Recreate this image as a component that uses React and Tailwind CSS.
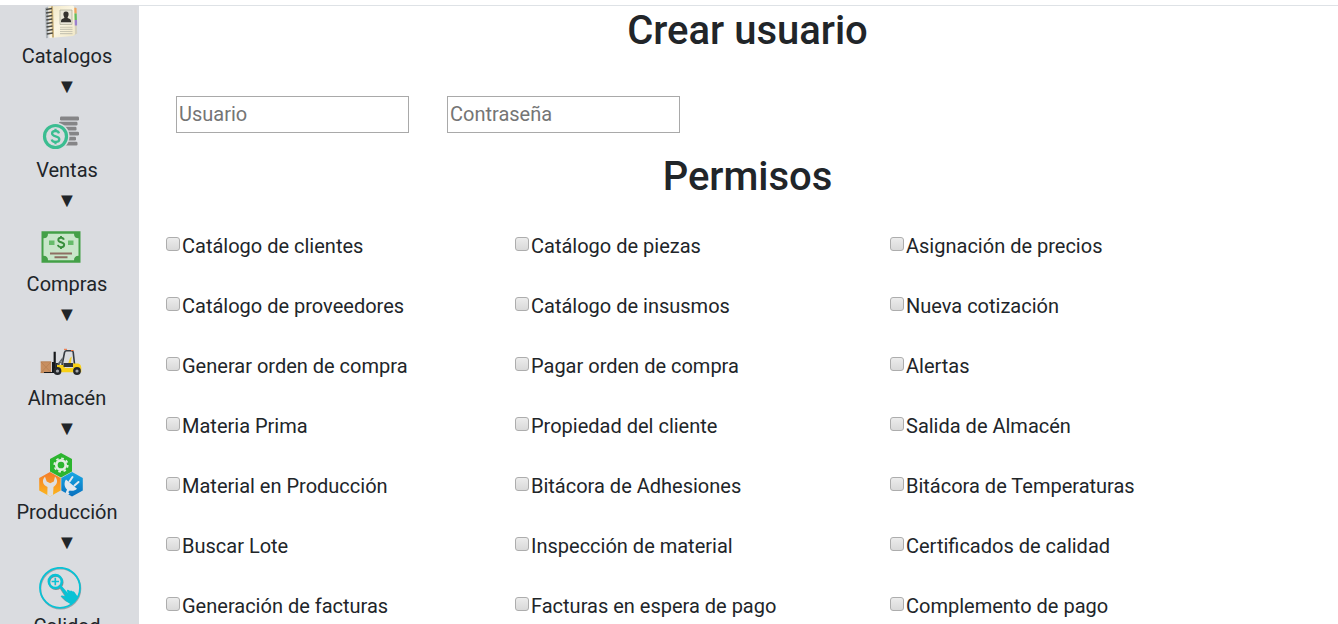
import React from "react";

function CatalogIcon() {
  return (
    <svg viewBox="0 0 44 44" className="size-11" aria-hidden="true">
      <defs>
        <linearGradient id="cover" x1="0" x2="1" y2="1">
          <stop offset="0" stopColor="#f1e6c2" />
          <stop offset="0.5" stopColor="#fbf6e4" />
          <stop offset="1" stopColor="#efe6c4" />
        </linearGradient>
      </defs>
      <path d="M6 11l3-1.500v31.500l-2 .3z" fill="#aeb4b9" />
      <path d="M34 10h3l1.200 26.500-3.700 2z" fill="#d3cfbd" />
      <path d="M35 11h2.500l.2 5.500H35z" fill="#f0a45c" />
      <path d="M35 16.500h2.700l.2 6.500H35z" fill="#64bd5b" />
      <path d="M35 23h3l.1 5.500H35z" fill="#9b80cf" />
      <path d="M9.500 9.500L33.500 8.500q1.700 0 1.700 2L36 37q0 1.600-2 1.900L10.500 41z" fill="url(#cover)" />
      <path d="M12 9.300h2l1 31.300h-2z" fill="#c6ae78" />
      <path d="M7 12.500l6-1M7 16l6-1M7.300 19.500l6-1M7.300 23l6-1M7.500 26.500l6-1M7.500 30l6-1M7.800 33.500l6-1M7.800 37l6-1" stroke="#4b4a44" strokeWidth="1.600" />
      <path d="M21 13h12v14.500H21z" fill="#e9e6d8" stroke="#aaa995" strokeWidth=".7" />
      <path d="M27 14.500c2.200 0 3 1.600 2.500 3.700-.3 1.300-.9 1.800-.9 2.800 1.600.5 3.400.9 3.400 3.300v1H22v-1c0-2.400 1.800-2.800 3.400-3.300 0-1-.6-1.500-.9-2.800-.5-2.100.3-3.700 2.500-3.700z" fill="#34322f" />
      <path d="M21 30.300h12.500M21 32.400h12.500M21 34.500h12.500M21 36.600h12.500" stroke="#c9c6b4" strokeWidth="1.100" />
    </svg>
  );
}

function SalesIcon() {
  return (
    <svg viewBox="0 0 44 44" className="size-11" aria-hidden="true">
      <g fill="#858587">
        <rect x="21" y="5.500" width="19" height="4" rx="1.200" />
        <rect x="20" y="10.800" width="18.500" height="3.700" rx="1.200" />
        <rect x="21" y="15.800" width="16.500" height="3.700" rx="1.200" />
        <rect x="23" y="20.800" width="17" height="3.700" rx="1.200" />
        <rect x="25" y="25.800" width="12" height="3.700" rx="1.200" />
        <rect x="22" y="30.800" width="16.500" height="3.700" rx="1.200" />
      </g>
      <circle cx="16.500" cy="25.500" r="14" fill="#dadce0" />
      <circle cx="16.500" cy="25.500" r="11" fill="none" stroke="#3bbd91" strokeWidth="3.200" />
      <path d="M20 22.300c-.5-1.600-1.700-2.300-3.500-2.300-2 0-3.400 1-3.400 2.600 0 3.700 7.200 1.900 7.200 5.700 0 1.700-1.500 2.700-3.700 2.700-2 0-3.500-.9-3.900-2.600M16.500 17.700v2.500M16.500 30.800v2.500" fill="none" stroke="#3bbd91" strokeWidth="2.300" />
    </svg>
  );
}

function PurchaseIcon() {
  return (
    <svg viewBox="0 0 44 44" className="size-11" aria-hidden="true">
      <path d="M2.500 6.300h39v31.500h-39z" fill="#43a047" />
      <path d="M9 8.800h26c0 3 1.500 4.500 4.500 4.500v17.500c-3 0-4.500 1.500-4.500 4.500H9c0-3-1.500-4.500-4.500-4.500V13.300C7.500 13.300 9 11.800 9 8.800z" fill="#c8e6c9" />
      <path d="M10 15.500h5.500v4.500H10zM29 15.500h5.500v4.500H29z" fill="#66bb6a" />
      <path d="M24.800 14.800c-.3-1.300-1.200-2-2.700-2-1.700 0-2.800.8-2.800 2.100 0 3 5.900 1.700 5.900 4.900 0 1.500-1.200 2.400-3 2.400s-3-.8-3.300-2.300M22 11v2M22 22v2" fill="none" stroke="#388e3c" strokeWidth="1.900" />
      <path d="M11 28.500h22M15.500 32.300h13" stroke="#8d6e63" strokeWidth="1.900" />
    </svg>
  );
}

function ForkliftIcon() {
  return (
    <svg viewBox="0 0 44 44" className="size-11" aria-hidden="true">
      <path d="M1.700 22.500h10.500V34H1.700z" fill="#c88f60" />
      <path d="M2 23l10 10.500M12 23L2 33.500M1.700 22.800h10.500M1.700 33.600h10.500" stroke="#b07a4e" strokeWidth=".6" fill="none" />
      <path d="M13 23h1.600V12.800h2.200V34H5v-1h8z" fill="#17191c" />
      <path d="M16.500 24h4v7h-4z" fill="#24272a" />
      <path d="M22.500 29l3-15.500q.5-1.800 2-1.800h5q1.400 0 1.700 1.500L35.500 25" fill="none" stroke="#363b42" strokeWidth="1.600" />
      <path d="M25 10.300h3M32 11.500h2.500" stroke="#ef6b35" strokeWidth="1" />
      <path d="M19 25l4-5v5M18 26l4-3" fill="none" stroke="#5b6067" strokeWidth="1.200" />
      <path d="M31 19l1.800-1.500L31.800 25H29z" fill="#f2cf2a" />
      <path d="M18 26h7l1 3h8v-4.500h5q3 .5 3.300 4v4.700H18z" fill="#f8d018" />
      <path d="M24.500 24h9.500v4H24.500z" fill="#32363a" />
      <g fill="#25282b">
        <circle cx="18.500" cy="32" r="3.900" />
        <circle cx="38" cy="32" r="3.900" />
      </g>
      <g fill="#a5a8ac">
        <circle cx="18.500" cy="32" r="1.600" />
        <circle cx="38" cy="32" r="1.600" />
      </g>
    </svg>
  );
}

function ProductionIcon() {
  return (
    <svg viewBox="0 0 44 44" className="size-11" aria-hidden="true">
      <defs>
        <linearGradient id="orange" x2="0" y2="1">
          <stop stopColor="#f47b2b" />
          <stop offset="1" stopColor="#fcb71c" />
        </linearGradient>
        <linearGradient id="blue" x2="0" y2="1">
          <stop stopColor="#18a8e4" />
          <stop offset="1" stopColor="#0970be" />
        </linearGradient>
      </defs>
      <path d="M22 0l11 6v12.500L22 24.500l-11-6V6z" fill="#2cb52f" />
      <path d="M11 19l10.700 6v12.500L11 43.500.2 37.500V25z" fill="url(#orange)" />
      <path d="M33 19l10.800 6v12.500L33 43.500l-10.700-6V25z" fill="url(#blue)" />
      <circle cx="22" cy="12" r="4.700" fill="none" stroke="#e2eee2" strokeWidth="2.700" />
      <circle cx="22" cy="12" r="6.700" fill="none" stroke="#e2eee2" strokeWidth="1.800" strokeDasharray="2.630 2.630" />
      <path d="M6 23.800l1.700 4.700 3.500 1.700 3.600-1.700 1.200-5c3 3 3 7.700-1.500 10.500L14 41.800l-3 1.700-2.700-1.500.2-8C3.500 32 2.500 27 6 23.800z" fill="#dfdfdf" />
      <path d="M27 26.500l11 9.300c-2.200 2-4.800 2.500-7.300 1.600l-1.400 1.600 1.200 1.800-1.500 1-2.500-1.500 1.500-3.800c-2.800-2.500-3.200-6.800-1-10z" fill="#e2e8ee" />
      <path d="M30.500 28.500l3-4.500M35.500 32.500l4-3.500" stroke="#e2e8ee" strokeWidth="2" strokeLinecap="round" />
    </svg>
  );
}

function QualityIcon() {
  return (
    <svg viewBox="0 0 44 44" className="size-11" aria-hidden="true">
      <circle cx="21.500" cy="21.800" r="20" fill="none" stroke="#858c91" strokeWidth="1.600" opacity=".7" />
      <circle cx="21" cy="20.800" r="20" fill="none" stroke="#09c2d5" strokeWidth="1.800" />
      <circle cx="17" cy="15.500" r="6.700" fill="none" stroke="#83898e" strokeWidth="1.700" />
      <circle cx="16.300" cy="14.500" r="6.500" fill="none" stroke="#09c2d5" strokeWidth="2.500" />
      <path d="M16.300 10.800v7.400M12.600 14.500H20" stroke="#09c2d5" strokeWidth="1.600" />
      <path d="M20.300 20l2-1.500 7 8c-.8-1.200-2-3.400-1-3.600 1-.4 2.300.5 2.800 1.300.4-.9 1.500-.7 2.300.2.800-.4 1.500.1 2.200.9l3.300 4.800c-1.200 3.600-3.900 5.800-7.200 7.200l-5.600-3.500-4.500-4.500c.5-1.400 2.500-1 4.500 0z" fill="#09c2d5" />
      <path d="M20.500 20.500l5.500 8.500M22.500 30l5 4.500" stroke="#858c91" strokeWidth=".7" fill="none" />
    </svg>
  );
}

const sections = [
  ["Catalogos", CatalogIcon],
  ["Ventas", SalesIcon],
  ["Compras", PurchaseIcon],
  ["Almacén", ForkliftIcon],
  ["Producción", ProductionIcon],
  ["Calidad", QualityIcon],
];

const permissions = [
  ["Catálogo de clientes", "Catálogo de piezas", "Asignación de precios"],
  ["Catálogo de proveedores", "Catálogo de insusmos", "Nueva cotización"],
  ["Generar orden de compra", "Pagar orden de compra", "Alertas"],
  ["Materia Prima", "Propiedad del cliente", "Salida de Almacén"],
  ["Material en Producción", "Bitácora de Adhesiones", "Bitácora de Temperaturas"],
  ["Buscar Lote", "Inspección de material", "Certificados de calidad"],
  ["Generación de facturas", "Facturas en espera de pago", "Complemento de pago"],
];

function Permission({ label }) {
  return (
    <label className="flex h-[60px] items-center gap-[2px] whitespace-nowrap">
      <input
        type="checkbox"
        className="mb-1 size-[14px] shrink-0 appearance-none rounded-[3px] border border-[#adadad] bg-linear-to-b from-[#ececec] to-[#d9d9d9] checked:bg-[#1a73e8] checked:bg-none"
      />
      {label}
    </label>
  );
}

export default function App() {
  return (
    <div className="flex h-screen flex-col overflow-hidden bg-white pt-[5px] font-['Roboto',sans-serif] text-[20px] leading-[30px] text-[#212529]">
      <div className="flex min-h-0 flex-1">
        <nav className="w-[139px] shrink-0 overflow-hidden bg-[#dadce0] pr-[5px]">
          <ul className="-mt-4">
            {sections.map(([name, Icon]) => (
              <li key={name}>
                <button type="button" className="flex w-full flex-col items-center pt-2">
                  <span className="pr-3">
                    <Icon />
                  </span>
                  <span>{name}</span>
                  <span className="h-8 leading-[30px]">▼</span>
                </button>
              </li>
            ))}
          </ul>
        </nav>
        <main className="min-w-0 flex-1 overflow-hidden border-t border-[#dee2e6] pl-[18px]">
          <h1 className="pt-px text-center text-[40px] leading-[48px] font-medium">Crear usuario</h1>
          <form>
            <div className="mt-[41px] flex gap-[38px] pl-[19px]">
              <input
                type="text"
                aria-label="Usuario"
                placeholder="Usuario"
                className="h-[37px] w-[233px] border border-[#a9a9a9] px-[2px] pb-[2px] placeholder:text-[#757575]"
              />
              <input
                type="password"
                aria-label="Contraseña"
                placeholder="Contraseña"
                className="h-[37px] w-[233px] border border-[#a9a9a9] px-[2px] pb-[2px] placeholder:text-[#757575]"
              />
            </div>
            <h2 className="mt-5 text-center text-[40px] leading-[48px] font-medium">Permisos</h2>
            <div className="mt-[15px] grid grid-cols-[349fr_375fr_448fr] pl-[9px]">
              {permissions.flat().map((label) => (
                <Permission key={label} label={label} />
              ))}
            </div>
          </form>
        </main>
      </div>
    </div>
  );
}
